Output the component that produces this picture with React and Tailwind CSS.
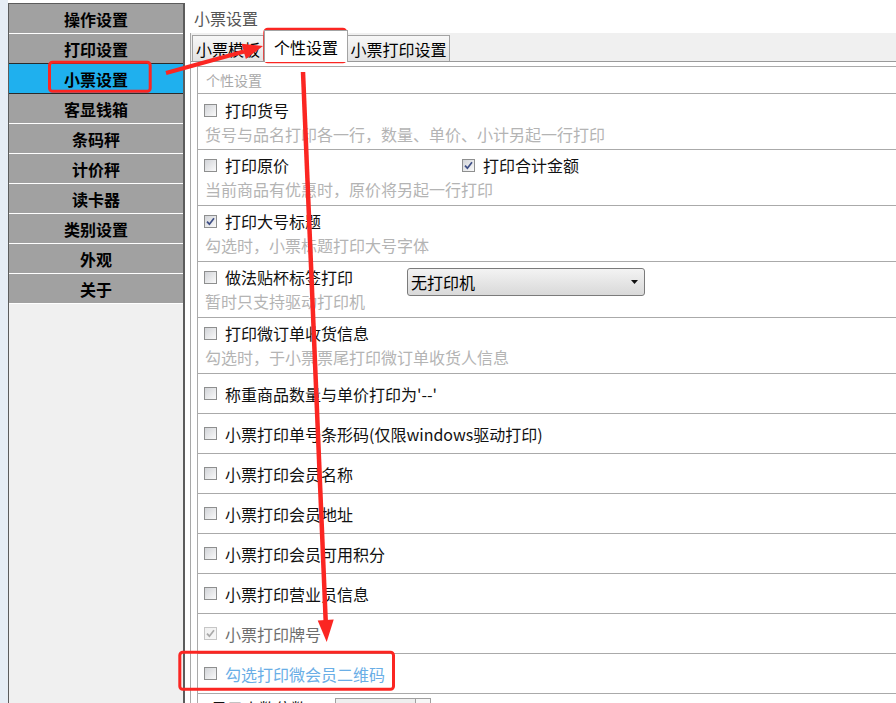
import React from 'react';

const FONT = { fontFamily: '"Noto Sans CJK SC", "Microsoft YaHei", sans-serif' };

const menu = ['操作设置', '打印设置', '小票设置', '客显钱箱', '条码秤', '计价秤', '读卡器', '类别设置', '外观', '关于'];
const SELECTED = 2;

const Box = ({ checked, disabled }) => (
    <span
        className={`w-[13px] h-[13px] shrink-0 border flex items-center justify-center bg-gradient-to-br ${
            disabled ? 'border-[#c6c6c6] from-[#f0f0f0] to-[#f8f8f8]' : 'border-[#8e8f8f] from-[#d2d4d8] to-[#fafafa]'
        }`}
    >
        {checked && (
            <svg width="9" height="9" viewBox="0 0 9 9">
                <path
                    d="M1 4.6 L3.4 7.2 L8 1.2"
                    fill="none"
                    stroke={disabled ? '#a9a9a9' : '#3f4f86'}
                    strokeWidth="1.7"
                />
            </svg>
        )}
    </span>
);

const Check = ({ label, checked, disabled, color = 'text-[#111]' }) => (
    <div className="flex items-center gap-[8px]">
        <Box checked={checked} disabled={disabled} />
        <span className={`text-[16px] leading-[20px] whitespace-nowrap ${color}`}>{label}</span>
    </div>
);

const Desc = ({ children }) => (
    <div className="mt-[2px] h-[24px] pl-[1px] text-[16px] leading-[24px] text-[#b4b4b4] whitespace-nowrap">{children}</div>
);

const singles = [
    { label: "称重商品数量与单价打印为'--'" },
    { label: '小票打印单号条形码(仅限windows驱动打印)' },
    { label: '小票打印会员名称' },
    { label: '小票打印会员地址' },
    { label: '小票打印会员可用积分' },
    { label: '小票打印营业员信息' },
    { label: '小票打印牌号', checked: true, disabled: true, color: 'text-[#6e6e6e]' },
    { label: '勾选打印微会员二维码', color: 'text-[#6aaee6]' },
];

const Annotations = () => (
    <svg className="absolute inset-0 pointer-events-none" width="896" height="703" viewBox="0 0 896 703">
        <g fill="none" stroke="#fb2622" strokeWidth="3">
            <rect x="49.5" y="62.2" width="100.7" height="29" rx="3" />
            <rect x="264.8" y="29.2" width="81" height="32.6" rx="3" />
            <rect x="179.8" y="652.2" width="213.7" height="37" rx="3" />
        </g>
        <line x1="166" y1="73" x2="244" y2="51.5" stroke="#fb2622" strokeWidth="4" />
        <polygon points="263,46 245.9,59.1 241.6,43.7" fill="#fb2622" />
        <line x1="303" y1="72" x2="325.7" y2="621" stroke="#fb2622" strokeWidth="4.5" />
        <polygon points="326.7,642 333.7,619.6 317.7,620.4" fill="#fb2622" />
    </svg>
);

export default function App() {
    return (
        <div className="relative w-[896px] h-[703px] overflow-hidden bg-white flex" style={FONT}>
            <div className="w-[8px] shrink-0 bg-[#e6edf5]" />

            {/* Left menu */}
            <aside className="w-[177px] shrink-0 mt-[3px] border-l border-t border-r-2 border-[#5c5c5c] bg-[#f0f0f0] flex flex-col">
                {menu.map((m, i) => (
                    <div
                        key={m}
                        className={`h-[30px] shrink-0 border-b flex items-center justify-center text-[16px] font-bold text-black ${
                            i === SELECTED ? 'bg-[#1fb0ee]' : 'bg-[#a1a1a1]'
                        } ${i === SELECTED || i === SELECTED - 1 ? 'border-[#2a2a2a]' : 'border-white'}`}
                    >
                        {m}
                    </div>
                ))}
            </aside>

            {/* Right pane */}
            <div className="flex-1 flex flex-col min-w-0 min-h-0">
                <div className="h-[33px] shrink-0 pl-[9px] pt-[2px] flex items-center text-[16px] text-[#555]">小票设置</div>

                <div className="ml-[5px] flex-1 min-h-0 flex flex-col border-l border-[#a8a8a8]">
                    {/* tabs */}
                    <div className="h-[28px] shrink-0 bg-[#f0f0f0] flex items-end pl-[1px]">
                        <div className="h-[26px] w-[72px] border border-b-0 border-[#a3a3a3] bg-gradient-to-b from-[#f7f7f7] to-[#e3e3e3] flex items-center justify-center text-[16px] text-black">
                            小票模板
                        </div>
                        <div className="relative z-10 -mb-px h-[32px] w-[84px] border border-b-0 border-[#a3a3a3] bg-white flex items-center justify-center text-[16px] text-black">
                            个性设置
                        </div>
                        <div className="h-[26px] w-[102px] border border-b-0 border-l-0 border-[#a3a3a3] bg-gradient-to-b from-[#f7f7f7] to-[#e3e3e3] flex items-center justify-center text-[16px] text-black">
                            小票打印设置
                        </div>
                    </div>

                    {/* tab page */}
                    <div className="flex-1 min-h-0 overflow-hidden border-t border-[#9a9a9a] bg-white pl-[6px] pt-[4px]">
                        <div className="border-l border-t border-[#aaaaaa]">
                            <div className="h-[27px] border-b border-[#aaaaaa] pl-[8px] flex items-center text-[14px] text-[#a9a9a9]">
                                个性设置
                            </div>

                            <div className="h-[56px] border-b border-[#aaaaaa] pl-[6px] pt-[6px]">
                                <Check label="打印货号" />
                                <Desc>货号与品名打印各一行，数量、单价、小计另起一行打印</Desc>
                            </div>

                            <div className="h-[56px] border-b border-[#aaaaaa] pl-[6px] pt-[5px]">
                                <div className="flex">
                                    <div className="w-[258px]">
                                        <Check label="打印原价" />
                                    </div>
                                    <Check label="打印合计金额" checked />
                                </div>
                                <Desc>当前商品有优惠时，原价将另起一行打印</Desc>
                            </div>

                            <div className="h-[56px] border-b border-[#aaaaaa] pl-[6px] pt-[5px]">
                                <Check label="打印大号标题" checked />
                                <Desc>勾选时，小票标题打印大号字体</Desc>
                            </div>

                            <div className="h-[56px] border-b border-[#aaaaaa] pl-[6px] pt-[5px]">
                                <div className="flex items-start h-[20px]">
                                    <div className="w-[203px]">
                                        <Check label="做法贴杯标签打印" />
                                    </div>
                                    <div className="relative z-0 mt-[1px] h-[28px] w-[238px] shrink-0 rounded-[3px] border border-[#7b7b7b] bg-gradient-to-b from-[#f3f3f3] to-[#d9d9d9] flex items-center justify-between pl-[3px] pr-[6px]">
                                        <span className="text-[16px] leading-[20px] text-black">无打印机</span>
                                        <svg width="7" height="4" viewBox="0 0 7 4">
                                            <path d="M0 0 H7 L3.5 4 Z" fill="#111" />
                                        </svg>
                                    </div>
                                </div>
                                <Desc>暂时只支持驱动打印机</Desc>
                            </div>

                            <div className="h-[56px] border-b border-[#aaaaaa] pl-[6px] pt-[5px]">
                                <Check label="打印微订单收货信息" />
                                <Desc>勾选时，于小票票尾打印微订单收货人信息</Desc>
                            </div>

                            {singles.map((s) => (
                                <div key={s.label} className="h-[40px] border-b border-[#aaaaaa] pl-[6px] flex items-center">
                                    <Check {...s} />
                                </div>
                            ))}

                            <div className="h-[40px] pl-[13px] pt-[4px] flex items-start">
                                <span className="w-[124px] text-[16px] leading-[20px] text-[#111]">显示小数位数</span>
                                <div className="h-[24px] w-[96px] border border-[#a0a0a0] bg-[#efefef] flex justify-end">
                                    <div className="w-[15px] h-full border-l border-[#a0a0a0] bg-[#f7f7f7]" />
                                </div>
                            </div>
                        </div>
                    </div>
                </div>
            </div>

            <Annotations />
        </div>
    );
}
